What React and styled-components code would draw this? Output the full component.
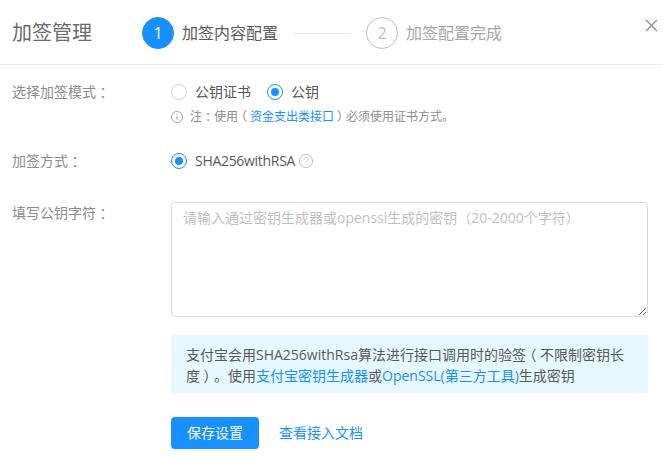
import React from "react";
import styled, { createGlobalStyle } from "styled-components";

const Global = createGlobalStyle`
  html, body { margin: 0; padding: 0; background: #fff; }
  body {
    font-family: "Open Sans", "Noto Sans CJK SC", sans-serif;
    font-size: 14px;
    color: #595959;
    text-spacing-trim: space-all;
  }
  * { box-sizing: border-box; }
`;

const Modal = styled.div`
  width: 663px;
  height: 472px;
  overflow: hidden;
  background: #fff;
  position: relative;
`;

const Header = styled.header`
  height: 65px;
  border-bottom: 1px solid #e8e8e8;
  display: flex;
  align-items: center;
  padding: 2px 0 0 12px;
`;

const Title = styled.h2`
  margin: 0;
  width: 130px;
  font-size: 20px;
  font-weight: 400;
  color: #6b6b6b;
  line-height: 28px;
`;

const Circle = styled.span`
  width: 32px;
  height: 32px;
  border-radius: 50%;
  display: flex;
  align-items: center;
  justify-content: center;
  font-size: 16px;
  background: ${(p) => (p.$active ? "#1890ff" : "#fff")};
  color: ${(p) => (p.$active ? "#fff" : "#bfbfbf")};
  border: 1px solid ${(p) => (p.$active ? "#1890ff" : "#bfbfbf")};
`;

const Step = styled.div`
  display: flex;
  align-items: center;
  gap: 8px;
`;

const StepLabel = styled.span`
  font-size: 16px;
  line-height: 24px;
  color: ${(p) => (p.$active ? "#595959" : "#a6a6a6")};
`;

const StepLine = styled.span`
  width: 56px;
  height: 1px;
  background: #e8e8e8;
  margin: 0 16px;
`;

const Close = styled.button`
  position: absolute;
  top: 19px;
  right: 5px;
  width: 13px;
  height: 13px;
  padding: 0;
  border: 0;
  background: none;
  display: flex;
`;

const Form = styled.div`
  padding: 16px 15px 0 12px;
  display: flex;
  flex-direction: column;
`;

const Row = styled.div`
  display: grid;
  grid-template-columns: 159px 477px;
  margin-bottom: ${(p) => p.$mb || 0}px;
`;

const Label = styled.label`
  color: #8c8c8c;
  font-size: 14px;
  line-height: 22px;
`;

/* Full-width punctuation centred in its one-em cell, as the reference font draws it. */
const Punct = styled.span`
  font-feature-settings: "halt";
  padding: 0 0.25em;
`;

const Options = styled.div`
  display: flex;
  align-items: center;
  gap: 16px;
  height: 22px;
`;

const Option = styled.span`
  display: flex;
  align-items: center;
  gap: 8px;
  color: #595959;
  font-size: 14px;
  line-height: 22px;
  letter-spacing: ${(p) => (p.$tight ? "-0.3px" : "0")};
`;

const Radio = styled.span`
  width: 16px;
  height: 16px;
  border-radius: 50%;
  border: 1px solid ${(p) => (p.$on ? "#1890ff" : "#d9d9d9")};
  display: flex;
  align-items: center;
  justify-content: center;
  &::after {
    content: "";
    display: ${(p) => (p.$on ? "block" : "none")};
    width: 8px;
    height: 8px;
    border-radius: 50%;
    background: #1890ff;
  }
`;

const Note = styled.div`
  display: flex;
  align-items: center;
  gap: 7px;
  margin-top: 4px;
  font-size: 12px;
  line-height: 20px;
  color: #8c8c8c;
`;

const A = styled.a`
  color: #1890ff;
  text-decoration: none;
`;

const Help = styled.svg`
  width: 14px;
  height: 14px;
  margin-left: -12px;
`;

const TextArea = styled.textarea`
  display: block;
  width: 100%;
  height: 115px;
  margin: 0;
  border: 1px solid #d9d9d9;
  border-radius: 4px;
  padding: 4px 11px;
  font: inherit;
  font-size: 14px;
  line-height: 22px;
  color: #595959;
  outline: none;
  &::placeholder {
    color: #bfbfbf;
    opacity: 1;
  }
`;

const InfoBox = styled.div`
  margin-top: 18px;
  height: 58px;
  background: #e6f7ff;
  border-radius: 4px;
  padding: 9px 15px;
  font-size: 14px;
  line-height: 21px;
  color: #595959;
`;

const InfoLine = styled.div`
  white-space: nowrap;
`;

const Actions = styled.div`
  margin-top: 24px;
  display: flex;
  align-items: center;
  gap: 20px;
`;

const Primary = styled.button`
  width: 88px;
  height: 32px;
  padding: 0 0 2px;
  background: #1890ff;
  color: #fff;
  border: 0;
  border-radius: 4px;
  font: inherit;
  font-size: 14px;
  box-shadow: 0 2px 0 rgba(0, 0, 0, 0.035);
`;

const DocLink = styled(A)`
  padding-bottom: 2px;
`;

export default function App() {
  return (
    <Modal>
      <Global />
      <Header>
        <Title>加签管理</Title>
        <Step>
          <Circle $active>1</Circle>
          <StepLabel $active>加签内容配置</StepLabel>
        </Step>
        <StepLine />
        <Step>
          <Circle>2</Circle>
          <StepLabel>加签配置完成</StepLabel>
        </Step>
        <Close aria-label="关闭">
          <svg width="13" height="13" viewBox="0 0 13 13" fill="none" stroke="#8c8c8c" strokeWidth="1.2">
            <path d="M1 1l11 11M12 1L1 12" />
          </svg>
        </Close>
      </Header>
      <Form>
        <Row $mb={23}>
          <Label>
            选择加签模式<Punct>：</Punct>
          </Label>
          <div>
            <Options>
              <Option>
                <Radio />
                公钥证书
              </Option>
              <Option>
                <Radio $on />
                公钥
              </Option>
            </Options>
            <Note>
              <svg width="12" height="12" viewBox="0 0 12 12" fill="none" stroke="#a6a6a6">
                <circle cx="6" cy="6" r="5.5" />
                <path d="M6 5.2v3.6M6 3v1.2" />
              </svg>
              <span>
                注<Punct>：</Punct>使用<Punct>（</Punct>
                <A>资金支出类接口</A>
                <Punct>）</Punct>必须使用证书方式。
              </span>
            </Note>
          </div>
        </Row>
        <Row $mb={30}>
          <Label>
            加签方式<Punct>：</Punct>
          </Label>
          <Options>
            <Option $tight>
              <Radio $on />
              SHA256withRSA
            </Option>
            <Help viewBox="0 0 14 14" fill="none" stroke="#bfbfbf">
              <circle cx="7" cy="7" r="6.5" />
              <path d="M5 5.5a2 2 0 1 1 3 1.7c-.7.4-1 .8-1 1.5M7 10v1" />
            </Help>
          </Options>
        </Row>
        <Row>
          <Label>
            填写公钥字符<Punct>：</Punct>
          </Label>
          <div>
            <TextArea placeholder="请输入通过密钥生成器或openssl生成的密钥（20-2000个字符）" />
            <InfoBox>
              <InfoLine>
                支付宝会用SHA256withRsa算法进行接口调用时的验签<Punct>（</Punct>不限制密钥长
              </InfoLine>
              <InfoLine>
                度<Punct>）</Punct>。使用<A>支付宝密钥生成器</A>或<A>OpenSSL(第三方工具)</A>生成密钥
              </InfoLine>
            </InfoBox>
            <Actions>
              <Primary>保存设置</Primary>
              <DocLink>查看接入文档</DocLink>
            </Actions>
          </div>
        </Row>
      </Form>
    </Modal>
  );
}
